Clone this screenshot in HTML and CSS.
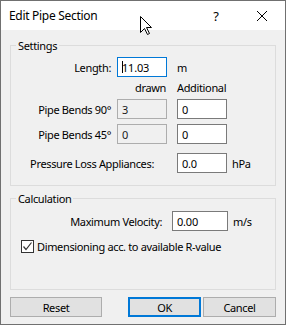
FILE: index.html
```html
<!DOCTYPE html>
<html lang="en">
<head>
    <meta charset="UTF-8">
    <title>Edit Pipe Section</title>
    <link rel="stylesheet" href="styles.css">
</head>
<body>
    <div class="dialog">
        <div class="titlebar">
            <span class="title">Edit Pipe Section</span>
            <span class="tbtn">?</span>
            <span class="tbtn">
                <svg width="10" height="10" viewBox="0 0 10 10"><path d="M0 0L10 10M10 0L0 10" stroke="#000" stroke-width="1"/></svg>
            </span>
        </div>

        <div class="content">
            <fieldset class="group settings">
                <legend>Settings</legend>

                <div class="row length-row">
                    <label class="lbl" for="length">Length:</label>
                    <span class="caret-wrap"><input class="field focus" id="length" type="text" value="11.03"></span>
                    <span class="unit">m</span>
                </div>

                <div class="row head-row">
                    <span class="col-drawn">drawn</span>
                    <span class="col-add">Additional</span>
                </div>

                <div class="row bends-row">
                    <label class="lbl" for="bends90">Pipe Bends 90°</label>
                    <input class="field drawn" type="text" value="3" readonly>
                    <input class="field extra" id="bends90" type="text" value="0">
                </div>

                <div class="row bends-row b45">
                    <label class="lbl" for="bends45">Pipe Bends 45°</label>
                    <input class="field drawn" type="text" value="0" readonly>
                    <input class="field extra" id="bends45" type="text" value="0">
                </div>

                <div class="row pressure-row">
                    <label class="lbl wide" for="pressure">Pressure Loss Appliances:</label>
                    <input class="field" id="pressure" type="text" value="0.0">
                    <span class="unit small">hPa</span>
                </div>
            </fieldset>

            <fieldset class="group calc">
                <legend>Calculation</legend>

                <div class="row velocity-row">
                    <label class="lbl vel" for="velocity">Maximum Velocity:</label>
                    <input class="field vel-field" id="velocity" type="text" value="0.00">
                    <span class="unit small">m/s</span>
                </div>

                <label class="row check-row">
                    <span class="checkbox">
                        <svg width="11" height="11" viewBox="0 0 11 11"><path d="M1.5 5.5L4 8.5L9.5 1.5" fill="none" stroke="#333" stroke-width="1.2"/></svg>
                    </span>
                    Dimensioning acc. to available R-value
                </label>
            </fieldset>

            <div class="buttons">
                <button class="btn reset">Reset</button>
                <button class="btn ok">OK</button>
                <button class="btn cancel">Cancel</button>
            </div>
        </div>

        <!-- mouse pointer caught in the screenshot -->
        <svg class="pointer" width="13" height="20" viewBox="0 0 13 20">
            <path d="M0.5 0.5L0.5 16.5L4.5 12.5L7.5 18.5L9.5 17.5L6.5 11.5L11.5 11.5Z" fill="#fff" stroke="#000" stroke-width="1"/>
        </svg>
    </div>
</body>
</html>
```

FILE: styles.css
```css
body {
    margin: 0;
    font-family: "Noto Sans", sans-serif;
    font-size: 11px;
    letter-spacing: -0.35px;
    color: #000;
}
.dialog {
    position: relative;
    width: 286px;
    height: 325px;
    box-sizing: border-box;
    border: 1px solid #707070;
    background-color: #f0f0f0;
}
.titlebar {
    display: flex;
    align-items: center;
    height: 29px;
    background-color: #fff;
}
.title {
    flex: 1;
    padding-left: 8px;
    font-size: 12px;
    letter-spacing: -0.3px;
}
.tbtn {
    width: 46px;
    height: 29px;
    display: flex;
    align-items: center;
    justify-content: center;
    font-size: 13px;
}
.content {
    padding: 8px 9px 0;
}
.group {
    margin: 0;
    padding: 0 0 12px;
    border: 1px solid #dcdcdc;
    min-width: 0;
}
.group legend {
    margin-left: 5px;
    padding: 0 2px;
    line-height: 15px;
}
.calc {
    margin-top: 5px;
    padding-bottom: 35px;
}
.row {
    display: flex;
    align-items: center;
    height: 20px;
}
.lbl {
    width: 100px;
    margin-right: 6px;
    text-align: right;
}
.lbl.wide {
    width: 143px;
    margin-right: 23px;
}
.lbl.vel {
    width: 151px;
    margin-right: 10px;
}
.field {
    width: 50px;
    height: 20px;
    box-sizing: border-box;
    margin: 0;
    border: 1px solid #7a7a7a;
    padding: 0 4px;
    background-color: #fff;
    font-family: inherit;
    font-size: 11px;
    letter-spacing: -0.2px;
    color: #000;
    outline: none;
}
.field.drawn {
    background-color: #f0f0f0;
    border-color: #adadad;
    color: #1a1a1a;
}
.field.focus {
    border-color: #0078d7;
}
.field.extra {
    margin-left: 10px;
}
.vel-field {
    width: 56px;
}
.caret-wrap {
    position: relative;
    display: flex;
}
.caret-wrap::after {
    content: "";
    position: absolute;
    left: 5px;
    top: 4px;
    width: 1px;
    height: 12px;
    background-color: #000;
}
.unit {
    margin-left: 10px;
}
.unit.small {
    margin-left: 5px;
}
.length-row {
    margin-top: 4px;
}
.head-row {
    margin-top: 4px;
    height: 14px;
    line-height: 14px;
}
.col-drawn {
    width: 49px;
    margin-left: 106px;
    text-align: right;
}
.col-add {
    margin-left: 11px;
}
.bends-row {
    margin-top: 4px;
}
.bends-row.b45 {
    margin-top: 5px;
}
.pressure-row {
    margin-top: 9px;
}
.velocity-row {
    margin-top: 5px;
}
.check-row {
    margin-top: 8px;
    height: 15px;
}
.checkbox {
    width: 13px;
    height: 13px;
    box-sizing: border-box;
    margin: 0 3px 0 10px;
    border: 1px solid #333;
    background-color: #fff;
    display: flex;
    align-items: center;
    justify-content: center;
}
.buttons {
    display: flex;
    margin-top: 7px;
}
.btn {
    height: 20px;
    margin: 0;
    padding: 0;
    border: 1px solid #adadad;
    background-color: #e1e1e1;
    font-family: inherit;
    font-size: 11px;
    letter-spacing: inherit;
    color: #000;
}
.reset {
    width: 92px;
}
.ok {
    width: 73px;
    margin-left: auto;
    border: 2px solid #0078d7;
}
.cancel {
    width: 73px;
    margin-left: 2px;
}
.pointer {
    position: absolute;
    left: 139px;
    top: 15px;
}
```
